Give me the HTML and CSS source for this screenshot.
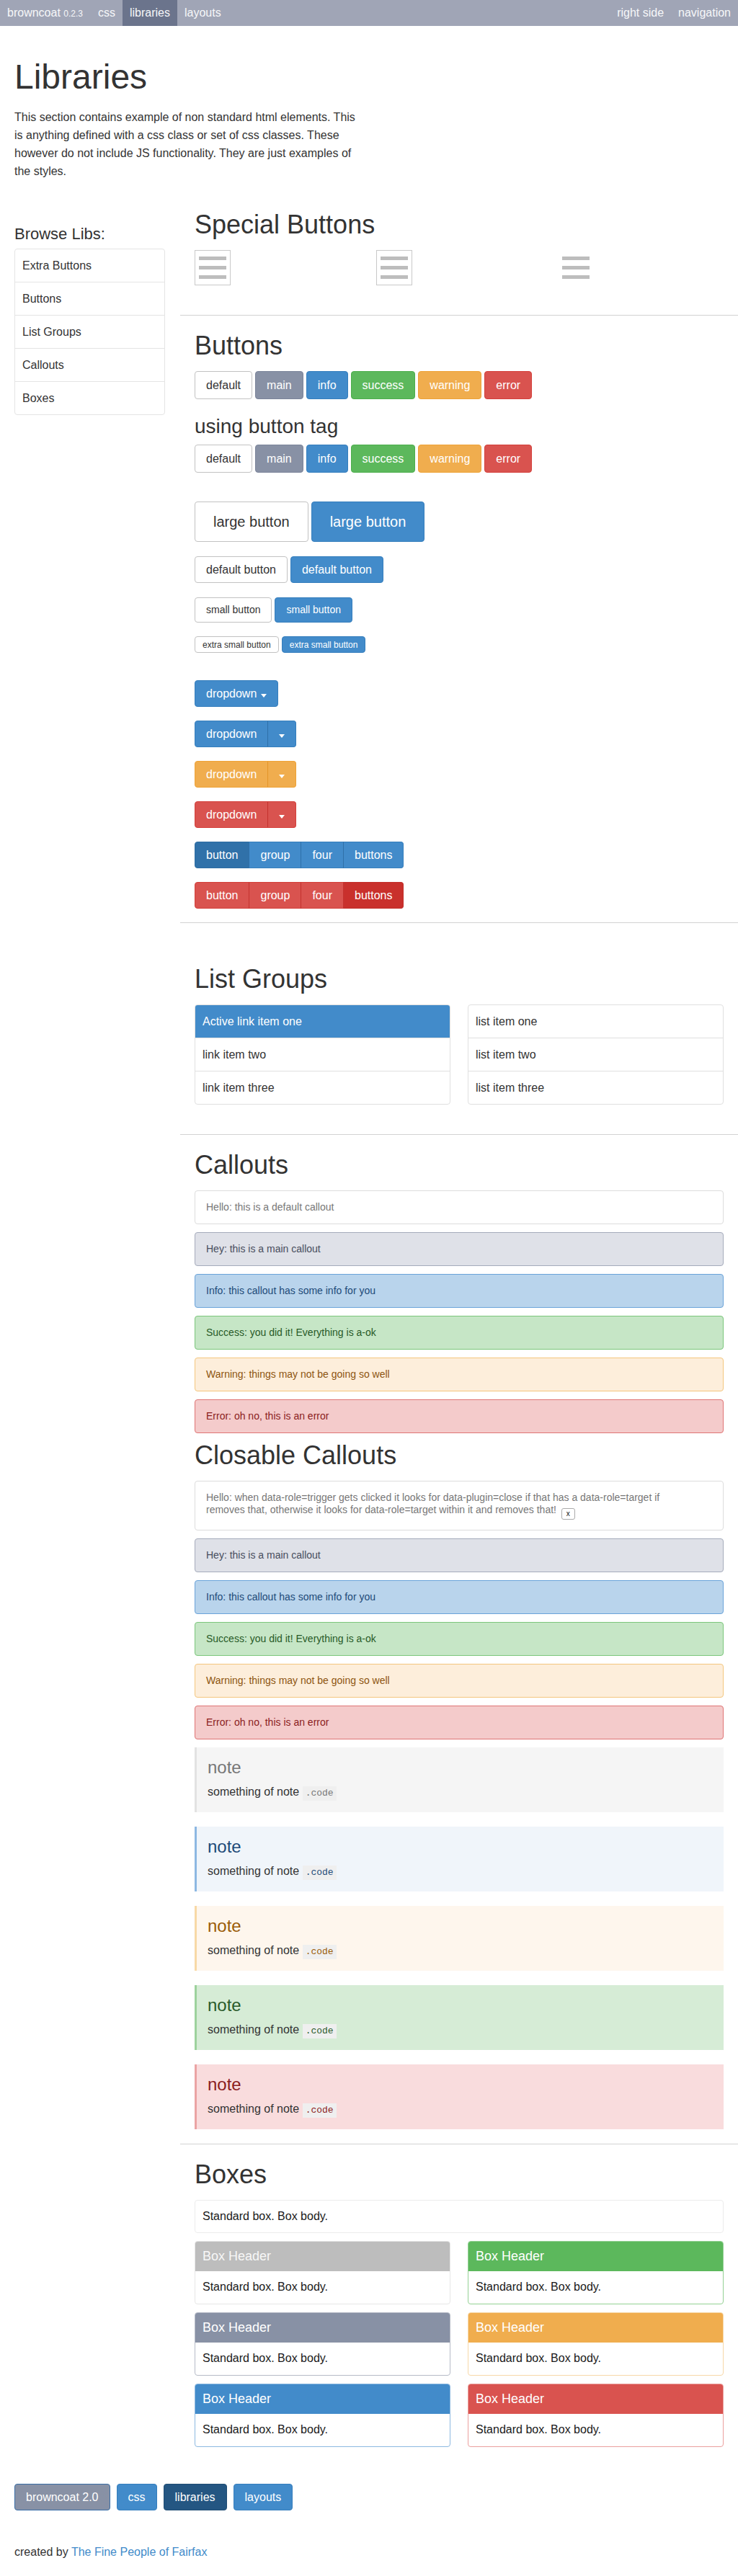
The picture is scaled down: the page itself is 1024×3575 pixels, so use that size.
FILE: index.html
```html
<!DOCTYPE html>
<html lang="en">
<head>
<meta charset="utf-8">
<title>Libraries - browncoat</title>
<link rel="stylesheet" href="styles.css">
</head>
<body>
<nav class="topnav">
  <a class="brand" href="#">browncoat <small>0.2.3</small></a>
  <a href="#">css</a>
  <a class="active" href="#">libraries</a>
  <a href="#">layouts</a>
  <a class="push" href="#">right side</a>
  <a href="#">navigation</a>
</nav>

<header class="intro">
  <h1>Libraries</h1>
  <p>This section contains example of non standard html elements. This is anything defined with a css class or set of css classes. These however do not include JS functionality. They are just examples of the styles.</p>
</header>

<div class="layout">
  <aside class="sidebar">
    <h3 class="side-title">Browse Libs:</h3>
    <ul class="side-list">
      <li>Extra Buttons</li>
      <li>Buttons</li>
      <li>List Groups</li>
      <li>Callouts</li>
      <li>Boxes</li>
    </ul>
  </aside>

  <main class="main">
    <section class="sec sec-special">
      <h2>Special Buttons</h2>
      <div class="special-row">
        <span class="burger"><i></i><i></i><i></i></span>
        <span class="burger"><i></i><i></i><i></i></span>
        <span class="burger plain"><i></i><i></i><i></i></span>
      </div>
    </section>
    <hr>

    <section class="sec sec-buttons">
      <h2>Buttons</h2>
      <div class="btn-line tall">
        <a class="btn btn-default" href="#">default</a>
        <a class="btn btn-main" href="#">main</a>
        <a class="btn btn-info" href="#">info</a>
        <a class="btn btn-success" href="#">success</a>
        <a class="btn btn-warning" href="#">warning</a>
        <a class="btn btn-error" href="#">error</a>
      </div>
      <h3 class="sub">using button tag</h3>
      <div class="btn-line tall">
        <button class="btn btn-default">default</button>
        <button class="btn btn-main">main</button>
        <button class="btn btn-info">info</button>
        <button class="btn btn-success">success</button>
        <button class="btn btn-warning">warning</button>
        <button class="btn btn-error">error</button>
      </div>
      <div class="btn-line space-xl">
        <a class="btn btn-lg btn-default" href="#">large button</a>
        <a class="btn btn-lg btn-info" href="#">large button</a>
      </div>
      <div class="btn-line space">
        <a class="btn btn-default" href="#">default button</a>
        <a class="btn btn-info" href="#">default button</a>
      </div>
      <div class="btn-line space">
        <a class="btn btn-sm btn-default" href="#">small button</a>
        <a class="btn btn-sm btn-info" href="#">small button</a>
      </div>
      <div class="btn-line space-s">
        <a class="btn btn-xs btn-default" href="#">extra small button</a>
        <a class="btn btn-xs btn-info" href="#">extra small button</a>
      </div>
      <div class="btn-line space-l">
        <a class="btn btn-info" href="#">dropdown <span class="caret"></span></a>
      </div>
      <div class="btn-line space-s">
        <div class="btn-group">
          <a class="btn btn-info" href="#">dropdown</a><a class="btn btn-info toggle" href="#"><span class="caret"></span></a>
        </div>
      </div>
      <div class="btn-line space-s">
        <div class="btn-group">
          <a class="btn btn-warning" href="#">dropdown</a><a class="btn btn-warning toggle" href="#"><span class="caret"></span></a>
        </div>
      </div>
      <div class="btn-line space-s">
        <div class="btn-group">
          <a class="btn btn-error" href="#">dropdown</a><a class="btn btn-error toggle" href="#"><span class="caret"></span></a>
        </div>
      </div>
      <div class="btn-line space-s">
        <div class="btn-group">
          <a class="btn btn-info active" href="#">button</a><a class="btn btn-info" href="#">group</a><a class="btn btn-info" href="#">four</a><a class="btn btn-info" href="#">buttons</a>
        </div>
      </div>
      <div class="btn-line space-s">
        <div class="btn-group">
          <a class="btn btn-error" href="#">button</a><a class="btn btn-error" href="#">group</a><a class="btn btn-error" href="#">four</a><a class="btn btn-error active" href="#">buttons</a>
        </div>
      </div>
    </section>
    <hr>

    <section class="sec sec-lists">
      <h2>List Groups</h2>
      <div class="lists">
        <div class="list-group">
          <a class="item active" href="#">Active link item one</a>
          <a class="item" href="#">link item two</a>
          <a class="item" href="#">link item three</a>
        </div>
        <ul class="list-group">
          <li class="item">list item one</li>
          <li class="item">list item two</li>
          <li class="item">list item three</li>
        </ul>
      </div>
    </section>
    <hr>

    <section class="sec sec-callouts">
      <h2>Callouts</h2>
      <div class="callout callout-default">Hello: this is a default callout</div>
      <div class="callout callout-main">Hey: this is a main callout</div>
      <div class="callout callout-info">Info: this callout has some info for you</div>
      <div class="callout callout-success">Success: you did it! Everything is a-ok</div>
      <div class="callout callout-warning">Warning: things may not be going so well</div>
      <div class="callout callout-error">Error: oh no, this is an error</div>

      <h2>Closable Callouts</h2>
      <div class="callout callout-default">Hello: when data-role=trigger gets clicked it looks for data-plugin=close if that has a data-role=target if<br>removes that, otherwise it looks for data-role=target within it and removes that! <button class="close">x</button></div>
      <div class="callout callout-main">Hey: this is a main callout</div>
      <div class="callout callout-info">Info: this callout has some info for you</div>
      <div class="callout callout-success">Success: you did it! Everything is a-ok</div>
      <div class="callout callout-warning">Warning: things may not be going so well</div>
      <div class="callout callout-error">Error: oh no, this is an error</div>

      <div class="note note-default"><h4>note</h4><p>something of note <code>.code</code></p></div>
      <div class="note note-info"><h4>note</h4><p>something of note <code>.code</code></p></div>
      <div class="note note-warning"><h4>note</h4><p>something of note <code>.code</code></p></div>
      <div class="note note-success"><h4>note</h4><p>something of note <code>.code</code></p></div>
      <div class="note note-error"><h4>note</h4><p>something of note <code>.code</code></p></div>
    </section>
    <hr>

    <section class="sec sec-boxes">
      <h2>Boxes</h2>
      <div class="box"><div class="box-body">Standard box. Box body.</div></div>
      <div class="box-grid">
        <div class="box box-gray"><div class="box-head">Box Header</div><div class="box-body">Standard box. Box body.</div></div>
        <div class="box box-success"><div class="box-head">Box Header</div><div class="box-body">Standard box. Box body.</div></div>
        <div class="box box-main"><div class="box-head">Box Header</div><div class="box-body">Standard box. Box body.</div></div>
        <div class="box box-warning"><div class="box-head">Box Header</div><div class="box-body">Standard box. Box body.</div></div>
        <div class="box box-info"><div class="box-head">Box Header</div><div class="box-body">Standard box. Box body.</div></div>
        <div class="box box-error"><div class="box-head">Box Header</div><div class="box-body">Standard box. Box body.</div></div>
      </div>
    </section>
  </main>
</div>

<footer class="footer">
  <nav class="footer-nav">
    <a class="btn fbtn fbtn-main" href="#">browncoat 2.0</a>
    <a class="btn fbtn" href="#">css</a>
    <a class="btn fbtn fbtn-active" href="#">libraries</a>
    <a class="btn fbtn" href="#">layouts</a>
  </nav>
  <p>created by <a href="#">The Fine People of Fairfax</a></p>
</footer>
</body>
</html>
```

FILE: styles.css
```css
* { box-sizing: border-box; }
html, body { margin: 0; padding: 0; }
body {
  font-family: "Liberation Sans", Arial, Helvetica, sans-serif;
  font-size: 16px;
  line-height: 25px;
  color: #333;
  background: #fff;
}
a { text-decoration: none; color: #428bca; }

/* top navigation */
.topnav { display: flex; height: 36px; background: #a0a5b6; }
.topnav a { display: block; padding: 0 10px; line-height: 36px; color: #f6f7f9; font-size: 16px; }
.topnav .brand { padding-right: 11px; }
.topnav .brand small { font-size: 12px; }
.topnav .active { background: #6b748c; }
.topnav .push { margin-left: auto; }

/* intro */
.intro { padding: 44px 20px 0; }
.intro h1 { margin: 0; font-size: 48px; line-height: 53px; font-weight: normal; color: #333; }
.intro p { margin: 17px 0 0; width: 476px; }

/* layout */
.layout { display: flex; align-items: flex-start; margin-top: 20px; }
.sidebar { width: 250px; flex: none; padding: 43px 0 0 20px; }
.side-title { margin: 0 0 8px; font-size: 22px; line-height: 24px; font-weight: normal; color: #333; }
.side-list { list-style: none; margin: 0; padding: 0; width: 209px; border: 1px solid #e4e4e4; border-radius: 4px; }
.side-list li { padding: 10px; line-height: 25px; border-top: 1px solid #e4e4e4; color: #333; }
.side-list li:first-child { border-top: 0; }

.main { flex: 1; min-width: 0; }
.main hr { margin: 0; height: 0; border: 0; border-top: 1px solid #d2d2d2; }
.sec { padding: 22px 20px 0; }
.sec h2 { margin: 0 0 15px; font-size: 36px; line-height: 40px; font-weight: normal; color: #333; }

.sec-special { padding-bottom: 41px; }
.sec-buttons { padding-bottom: 19px; }
.sec-lists { padding-top: 58px; padding-bottom: 41px; }
.sec-callouts { padding-bottom: 0; }

/* special buttons */
.special-row { display: grid; grid-template-columns: 252px 252px 1fr; }
.burger { display: flex; flex-direction: column; gap: 8px; width: 50px; padding: 8px 5px; border: 1px solid #c9c9c9; }
.burger i { display: block; height: 5px; background: #bdbdbd; }
.burger.plain { border-color: transparent; }

/* buttons */
.btn-line { display: flex; align-items: flex-start; gap: 4px; }
.btn-line.space-xl { margin-top: 40px; }
.btn-line.space-l { margin-top: 38px; }
.btn-line.space { margin-top: 20px; }
.btn-line.space-s { margin-top: 19px; }
.sub { margin: 22px 0 10px; font-size: 28px; line-height: 31px; font-weight: normal; color: #333; }

.btn {
  display: inline-block;
  font-family: inherit;
  font-size: 16px;
  line-height: 25px;
  padding: 5px 15px;
  border: 1px solid transparent;
  border-radius: 4px;
  color: #fff;
  white-space: nowrap;
  cursor: pointer;
}
.tall .btn { padding-top: 6px; padding-bottom: 6px; }
.btn-lg { font-size: 20px; line-height: 30px; padding: 12px 25px; }
.btn-sm { font-size: 14px; line-height: 21px; padding: 6px 15px; }
.btn-xs { font-size: 12px; line-height: 18px; padding: 1.5px 10px; }

.btn-default { background: #fff; border-color: #c2c2c2; color: #333; }
.btn-main { background: #8891a5; border-color: #7b849a; }
.btn-info { background: #428bca; border-color: #357ebd; }
.btn-success { background: #5cb85c; border-color: #4cae4c; }
.btn-warning { background: #f0ad4e; border-color: #eea236; }
.btn-error { background: #d9534f; border-color: #d43f3a; }
.btn-info.active { background: #3071a9; border-color: #2d6ca2; }
.btn-error.active { background: #c9302c; border-color: #c12e2a; }

.caret {
  display: inline-block;
  width: 0; height: 0;
  border-top: 5px solid #fff;
  border-left: 4.5px solid transparent;
  border-right: 4.5px solid transparent;
  margin-left: 1px;
}
.btn-group { display: flex; }
.btn-group .btn { border-radius: 0; }
.btn-group .btn + .btn { margin-left: -1px; }
.btn-group .btn:first-child { border-radius: 4px 0 0 4px; }
.btn-group .btn:last-child { border-radius: 0 4px 4px 0; }
.btn-group .btn-info + .btn-info { border-left-color: #2f70a8; }
.btn-group .btn-warning + .btn-warning { border-left-color: #e3962a; }
.btn-group .btn-error + .btn-error { border-left-color: #c4322e; }
.btn-group .toggle .caret { margin-left: 0; }

/* list groups */
.lists { display: grid; grid-template-columns: 1fr 1fr; column-gap: 24px; }
.list-group { margin: 0; padding: 0; list-style: none; border: 1px solid #e0e0e0; border-radius: 4px; overflow: hidden; }
.list-group .item { display: block; padding: 10px; line-height: 25px; color: #333; border-top: 1px solid #e0e0e0; }
.list-group .item:first-child { border-top: 0; }
.list-group .item.active { background: #428bca; color: #fff; }

/* callouts */
.callout {
  padding: 14px 15px;
  font-size: 14px;
  line-height: 17px;
  border: 1px solid;
  border-radius: 4px;
  margin-bottom: 11px;
}
.callout-default { background: #fff; border-color: #dcdcdc; color: #777; }
.callout-main { background: #dfe1e8; border-color: #a5abbb; color: #474d5d; }
.callout-info { background: #b9d4ec; border-color: #6aa3d9; color: #1d4a78; }
.callout-success { background: #c6e6c6; border-color: #7bc67b; color: #285a28; }
.callout-warning { background: #fdeedb; border-color: #f4c67e; color: #8d5510; }
.callout-error { background: #f4cbcb; border-color: #df7474; color: #8b1d1d; }
.close {
  display: inline-block;
  vertical-align: -4px;
  height: 16px;
  width: 19px;
  margin-left: 3px;
  padding: 0;
  font-family: inherit;
  font-size: 10px;
  line-height: 14px;
  color: #111;
  background: #fff;
  border: 1px solid #aaa;
  border-radius: 3px;
}

/* notes */
.note { padding: 15px 15px 16px; border-left: 3px solid; margin-bottom: 20px; }
.note h4 { margin: 0 0 8px; font-size: 24px; line-height: 26px; font-weight: normal; }
.note p { margin: 0; color: #333; }
.note code {
  display: inline-block;
  font-family: "Liberation Mono", "DejaVu Sans Mono", monospace;
  font-size: 13px;
  line-height: 16px;
  padding: 2px 4px;
  background: #efefef;
}
.note-default { background: #f5f5f5; border-color: #e2e2e2; }
.note-default h4, .note-default code { color: #777; }
.note-info { background: #f0f5fa; border-color: #8db8e2; }
.note-info h4, .note-info code { color: #1d4a78; }
.note-warning { background: #fef6ed; border-color: #f8d9a6; }
.note-warning h4, .note-warning code { color: #9a5c08; }
.note-success { background: #d6ecd6; border-color: #9dd29d; }
.note-success h4, .note-success code { color: #2a5a2a; }
.note-error { background: #f9dcdd; border-color: #eba4a4; }
.note-error h4, .note-error code { color: #8b1d1d; }

/* boxes */
.box { border: 1px solid #ececec; border-radius: 4px; margin-bottom: 11px; background: #fff; overflow: hidden; }
.box-body { padding: 10px; line-height: 24px; color: #1a1a1a; }
.box-head + .box-body { padding-bottom: 11px; }
.box-head { padding: 10px; font-size: 18px; line-height: 21px; color: #fff; }
.box-grid { display: grid; grid-template-columns: 1fr 1fr; column-gap: 24px; }
.box-gray { border-color: #e6e6e6; }
.box-gray .box-head { background: #bdbdbd; color: #f7f7f7; }
.box-success { border-color: #94d194; }
.box-success .box-head { background: #5cb85c; }
.box-main { border-color: #b6bbc7; }
.box-main .box-head { background: #8891a5; }
.box-warning { border-color: #f7d8a8; }
.box-warning .box-head { background: #f0ad4e; }
.box-info { border-color: #8cb8e0; }
.box-info .box-head { background: #428bca; }
.box-error { border-color: #eba09e; }
.box-error .box-head { background: #d9534f; }

/* footer */
.footer { padding: 40px 20px 20px; }
.footer-nav { display: flex; gap: 9px; }
.fbtn { background: #428bca; border-color: #357ebd; }
.fbtn-main { background: #8891a5; border-color: #3a6ea5; }
.fbtn-active { background: #245682; border-color: #204d74; }
.footer p { margin: 45px 0 0; color: #333; }
.footer p a { color: #428bca; }
```
